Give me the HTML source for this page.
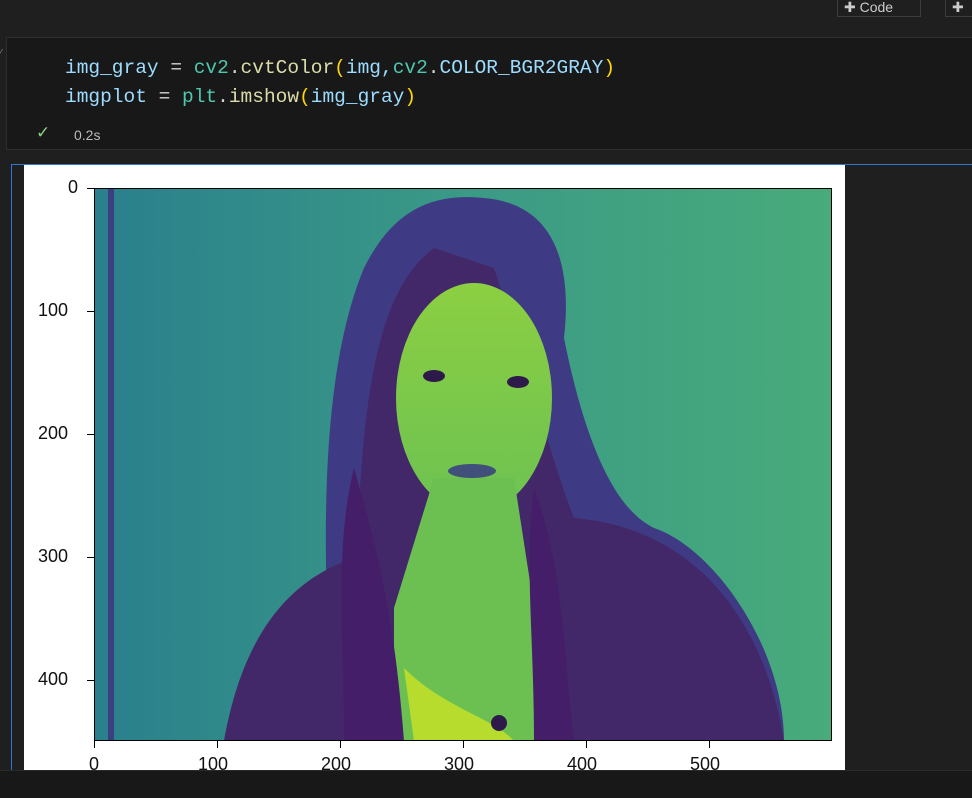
<!DOCTYPE html>
<html><head><meta charset="utf-8"><style>
body{margin:0;width:972px;height:797px;background:#1f1f1f;position:relative;overflow:hidden;font-family:"Liberation Sans",sans-serif}
.btn{position:absolute;top:-1px;height:18px;border:1px solid #3c3c3c;color:#ccc;font-size:14px;line-height:14px;box-sizing:border-box}
.cell{position:absolute;left:6px;top:37px;width:970px;height:113px;background:#181818;border:1px solid #2e2e2e;box-sizing:border-box}
.code{position:absolute;left:65px;font-family:"Liberation Mono",monospace;font-size:19.5px;color:#9cdcfe;white-space:pre}
.out{position:absolute;left:11px;top:164px;width:961px;height:606px;border-top:1px solid #2b79d0;border-left:1px solid #2b79d0;box-sizing:border-box}
.plot{position:absolute;left:24px;top:165px;width:821px;height:605px;background:#fff}
.lab{position:absolute;font-size:18px;color:#111}
</style></head><body>
<div class="btn" style="left:837px;width:84px;padding-left:6px">✚ Code</div>
<div class="btn" style="left:945px;width:40px;padding-left:6px">✚</div>
<div style="position:absolute;left:0;top:48px;color:#888;font-size:10px">⁄</div>
<div class="cell"></div>
<div class="code" style="top:57px">img_gray <span style="color:#d4d4d4">=</span> <span style="color:#4ec9b0">cv2</span><span style="color:#d4d4d4">.</span><span style="color:#dcdcaa">cvtColor</span><span style="color:#ffd700">(</span>img,<span style="color:#4ec9b0">cv2</span><span style="color:#d4d4d4">.</span>COLOR_BGR2GRAY<span style="color:#ffd700">)</span></div>
<div class="code" style="top:86px">imgplot <span style="color:#d4d4d4">=</span> <span style="color:#4ec9b0">plt</span><span style="color:#d4d4d4">.</span><span style="color:#dcdcaa">imshow</span><span style="color:#ffd700">(</span>img_gray<span style="color:#ffd700">)</span></div>
<div style="position:absolute;left:36px;top:123px;color:#89d185;font-size:17px">✓</div>
<div style="position:absolute;left:74px;top:127px;color:#bbb;font-size:14px">0.2s</div>
<div class="out"></div>
<div class="plot"></div>
<svg style="position:absolute;left:94px;top:188px" width="738" height="553" viewBox="0 0 738 553">
<defs><linearGradient id="bg" x1="0" x2="1"><stop offset="0" stop-color="#2a7f8c"/><stop offset=".5" stop-color="#3a9a86"/><stop offset="1" stop-color="#48ab7a"/></linearGradient>
<linearGradient id="fc" x1="0" y1="0" x2="0" y2="1"><stop offset="0" stop-color="#8ccf42"/><stop offset="1" stop-color="#6cc252"/></linearGradient></defs>
<rect width="738" height="553" fill="url(#bg)"/>
<rect x="14" width="6" height="553" fill="#3b3f80"/>
<path d="M240 553 C230 400 220 200 270 80 C300 20 340 5 390 10 C450 15 480 60 470 150 C500 300 540 330 560 340 C620 360 690 460 690 553 Z" fill="#3f3a84"/>
<path d="M130 553 C150 440 200 390 260 370 L270 250 C280 150 300 90 340 60 L400 80 C440 200 460 280 480 330 C600 340 670 430 690 553 Z" fill="#432869"/>
<ellipse cx="380" cy="210" rx="78" ry="115" fill="url(#fc)"/>
<path d="M340 290 L420 290 L440 420 L440 553 L300 553 L300 420 Z" fill="#6cc052"/>
<path d="M310 480 C350 520 400 530 420 553 L320 553 Z" fill="#b7dc2e"/>
<ellipse cx="340" cy="188" rx="11" ry="6" fill="#2d1a4a"/>
<ellipse cx="424" cy="194" rx="11" ry="6" fill="#2d1a4a"/>
<ellipse cx="378" cy="283" rx="24" ry="7" fill="#40507a"/>
<path d="M260 280 C280 350 300 420 310 553 L250 553 C250 450 240 360 260 280Z" fill="#451e6a"/>
<path d="M440 300 C470 380 470 470 480 553 L440 553 C440 450 430 370 440 300Z" fill="#451e6a"/>
<circle cx="405" cy="535" r="8" fill="#2d1a4a"/>
<rect x="0.5" y="0.5" width="737" height="552" fill="none" stroke="#000"/>
</svg>
<div style="position:absolute;left:94px;top:741px;width:738px;height:30px">
<div style="position:absolute;left:0;top:0;width:1px;height:7px;background:#000"></div>
<div style="position:absolute;left:123px;top:0;width:1px;height:7px;background:#000"></div>
<div style="position:absolute;left:246px;top:0;width:1px;height:7px;background:#000"></div>
<div style="position:absolute;left:369px;top:0;width:1px;height:7px;background:#000"></div>
<div style="position:absolute;left:492px;top:0;width:1px;height:7px;background:#000"></div>
<div style="position:absolute;left:615px;top:0;width:1px;height:7px;background:#000"></div>
</div>
<div class="lab" style="left:89px;top:754px">0</div>
<div class="lab" style="left:198px;top:754px">100</div>
<div class="lab" style="left:321px;top:754px">200</div>
<div class="lab" style="left:444px;top:754px">300</div>
<div class="lab" style="left:567px;top:754px">400</div>
<div class="lab" style="left:690px;top:754px">500</div>
<div style="position:absolute;left:87px;top:188px;width:7px;height:1px;background:#000"></div>
<div style="position:absolute;left:87px;top:311px;width:7px;height:1px;background:#000"></div>
<div style="position:absolute;left:87px;top:434px;width:7px;height:1px;background:#000"></div>
<div style="position:absolute;left:87px;top:557px;width:7px;height:1px;background:#000"></div>
<div style="position:absolute;left:87px;top:680px;width:7px;height:1px;background:#000"></div>
<div class="lab" style="left:68px;top:177px">0</div>
<div class="lab" style="left:38px;top:300px">100</div>
<div class="lab" style="left:38px;top:423px">200</div>
<div class="lab" style="left:38px;top:546px">300</div>
<div class="lab" style="left:38px;top:669px">400</div>
<div style="position:absolute;left:0;top:770px;width:972px;height:27px;background:#181818;border-top:1px solid #2a2a2a"></div>
</body></html>
